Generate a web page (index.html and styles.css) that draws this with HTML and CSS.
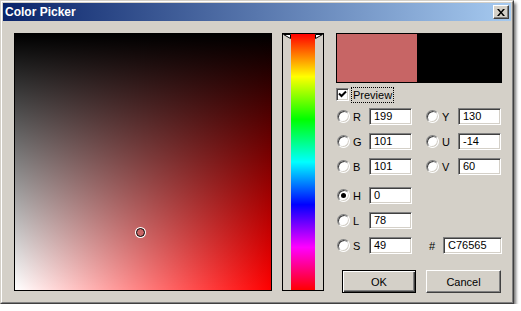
FILE: index.html
```html
<!DOCTYPE html>
<html lang="en">
<head>
  <meta charset="UTF-8">
  <title>Color Picker</title>
  <link rel="stylesheet" href="styles.css">
</head>
<body>

<div class="window">
  <div class="titlebar">
    <span class="title">Color Picker</span>
    <button class="close">
      <svg width="8" height="7" viewBox="0 0 8 7"><path d="M0 0h2l2 2.5L6 0h2L5 3.5 8 7H6L4 4.5 2 7H0l3-3.5z" fill="#000"/></svg>
    </button>
  </div>

  <div class="client">
    <div class="field">
      <div class="marker"></div>
    </div>

    <div class="hue">
      <svg class="arrow" width="8" height="6" viewBox="0 0 8 6"><path d="M0.5 0.5H7.5V4.5Z" fill="#fff" stroke="#000"/></svg>
      <div class="strip"></div>
      <svg class="arrow" width="8" height="6" viewBox="0 0 8 6"><path d="M7.5 0.5H0.5V4.5Z" fill="#fff" stroke="#000"/></svg>
    </div>

    <div class="panel">
      <div class="preview">
        <div class="new"></div>
        <div class="old"></div>
      </div>

      <label class="check">
        <span class="box"><svg width="9" height="9" viewBox="0 0 9 9"><path d="M1 3.5l2.5 2.5L8 1.5" fill="none" stroke="#000" stroke-width="2"/></svg></span>
        <span class="focus">Preview</span>
      </label>

      <div class="rows">
        <div class="row">
          <div class="opt"><span class="radio"></span><span class="lbl">R</span><span class="edit">199</span></div>
          <div class="opt"><span class="radio"></span><span class="lbl">Y</span><span class="edit">130</span></div>
        </div>
        <div class="row">
          <div class="opt"><span class="radio"></span><span class="lbl">G</span><span class="edit">101</span></div>
          <div class="opt"><span class="radio"></span><span class="lbl">U</span><span class="edit">-14</span></div>
        </div>
        <div class="row">
          <div class="opt"><span class="radio"></span><span class="lbl">B</span><span class="edit">101</span></div>
          <div class="opt"><span class="radio"></span><span class="lbl">V</span><span class="edit">60</span></div>
        </div>
        <div class="row spaced">
          <div class="opt"><span class="radio on"></span><span class="lbl">H</span><span class="edit">0</span></div>
        </div>
        <div class="row">
          <div class="opt"><span class="radio"></span><span class="lbl">L</span><span class="edit">78</span></div>
        </div>
        <div class="row">
          <div class="opt"><span class="radio"></span><span class="lbl">S</span><span class="edit">49</span></div>
          <div class="opt"><span class="hash">#</span><span class="edit hex">C76565</span></div>
        </div>
      </div>

      <div class="buttons">
        <button class="btn default">OK</button>
        <button class="btn">Cancel</button>
      </div>
    </div>
  </div>
</div>

</body>
</html>
```

FILE: styles.css
```css
* { box-sizing: border-box; margin: 0; padding: 0; }
body {
  background: #fff;
  font-family: 'Liberation Sans', Arial, sans-serif;
  font-size: 11px;
  color: #000;
}

.window {
  width: 514px;
  height: 304px;
  background: #D4D0C8;
  border: 1px solid;
  border-color: #D4D0C8 #404040 #404040 #D4D0C8;
  box-shadow: 2px 3px 3px rgba(0,0,0,0.55);
  padding: 1px;
  position: relative;
}
.window::before {
  content: "";
  position: absolute;
  inset: 0;
  border: 1px solid;
  border-color: #fff #808080 #808080 #fff;
  pointer-events: none;
}

.titlebar {
  height: 18px;
  margin: 1px;
  background: linear-gradient(to right, #0A246A, #A6CAF0);
  display: flex;
  align-items: center;
  justify-content: space-between;
  padding: 0 2px 0 2px;
}
.title {
  color: #fff;
  font-weight: bold;
  font-size: 12px;
}
.close {
  width: 16px;
  height: 14px;
  background: #D4D0C8;
  border: 1px solid;
  border-color: #fff #404040 #404040 #fff;
  box-shadow: inset -1px -1px #808080;
  display: flex;
  align-items: center;
  justify-content: center;
}

.client {
  display: flex;
  align-items: flex-start;
  padding: 11px 0 0 12px;
}

.field {
  width: 258px;
  height: 258px;
  border: 1px solid #000;
  background:
    linear-gradient(to bottom, #000, rgba(0,0,0,0)),
    linear-gradient(to right, #fff, #f00);
  position: relative;
}
.marker {
  position: absolute;
  left: 121px;
  top: 194px;
  width: 9px;
  height: 9px;
  border-radius: 50%;
  border: 1px solid #000;
  box-shadow: 0 0 0 1px #fff;
  background: #C76565;
}

.hue {
  margin-left: 10px;
  width: 42px;
  height: 258px;
  border: 1px solid #000;
  display: flex;
  align-items: flex-start;
}
.arrow { flex: none; display: block; }
.strip {
  width: 24px;
  height: 256px;
  flex: none;
  background: linear-gradient(to bottom, #f00, #ff0, #0f0, #0ff, #00f, #f0f, #f00);
}

.panel {
  margin-left: 12px;
  width: 166px;
}
.preview {
  height: 50px;
  border: 1px solid #000;
  display: flex;
}
.preview .new { width: 80px; background: #C76565; }
.preview .old { flex: 1; background: #000; }

.check {
  display: flex;
  align-items: center;
  margin-top: 4px;
  height: 15px;
}
.box {
  width: 13px;
  height: 13px;
  background: #fff;
  border: 1px solid;
  border-color: #808080 #fff #fff #808080;
  box-shadow: inset 1px 1px #404040, inset -1px -1px #D4D0C8;
  display: flex;
  align-items: center;
  justify-content: center;
}
.focus {
  margin-left: 3px;
  padding: 0 1px;
  outline: 1px dotted #000;
  line-height: 14px;
}

.rows {
  margin-top: 6px;
  display: flex;
  flex-direction: column;
  gap: 8px;
}
.row {
  display: flex;
  align-items: center;
  padding-left: 1px;
  gap: 14px;
}
.row.spaced { margin-top: 4px; }
.opt {
  display: flex;
  align-items: center;
}
.radio {
  width: 13px;
  height: 13px;
  border-radius: 50%;
  background: #fff;
  border: 1px solid;
  border-color: #808080 #fff #fff #808080;
  box-shadow: inset 1px 1px #404040, inset -1px -1px #D4D0C8;
  position: relative;
}
.radio.on::after {
  content: "";
  position: absolute;
  left: 3px;
  top: 3px;
  width: 5px;
  height: 5px;
  border-radius: 50%;
  background: #000;
}
.lbl {
  width: 19px;
  padding-left: 3px;
}
.edit {
  width: 43px;
  height: 17px;
  background: #fff;
  border: 1px solid;
  border-color: #808080 #fff #fff #808080;
  box-shadow: inset 1px 1px #404040, inset -1px -1px #D4D0C8;
  padding-left: 4px;
  line-height: 15px;
}
.hash {
  width: 17px;
  padding-left: 3px;
}
.edit.hex { width: 59px; }

.buttons {
  display: flex;
  gap: 10px;
  padding-left: 6px;
  margin-top: 16px;
}
.btn {
  width: 75px;
  height: 23px;
  font-family: inherit;
  font-size: 11px;
  background: #D4D0C8;
  border: 1px solid;
  border-color: #fff #404040 #404040 #fff;
  box-shadow: inset -1px -1px #808080;
}
.btn.default {
  width: 74px;
  border-color: #000;
  box-shadow: inset 1px 1px #fff, inset -1px -1px #404040, inset -2px -2px #808080;
}
```
